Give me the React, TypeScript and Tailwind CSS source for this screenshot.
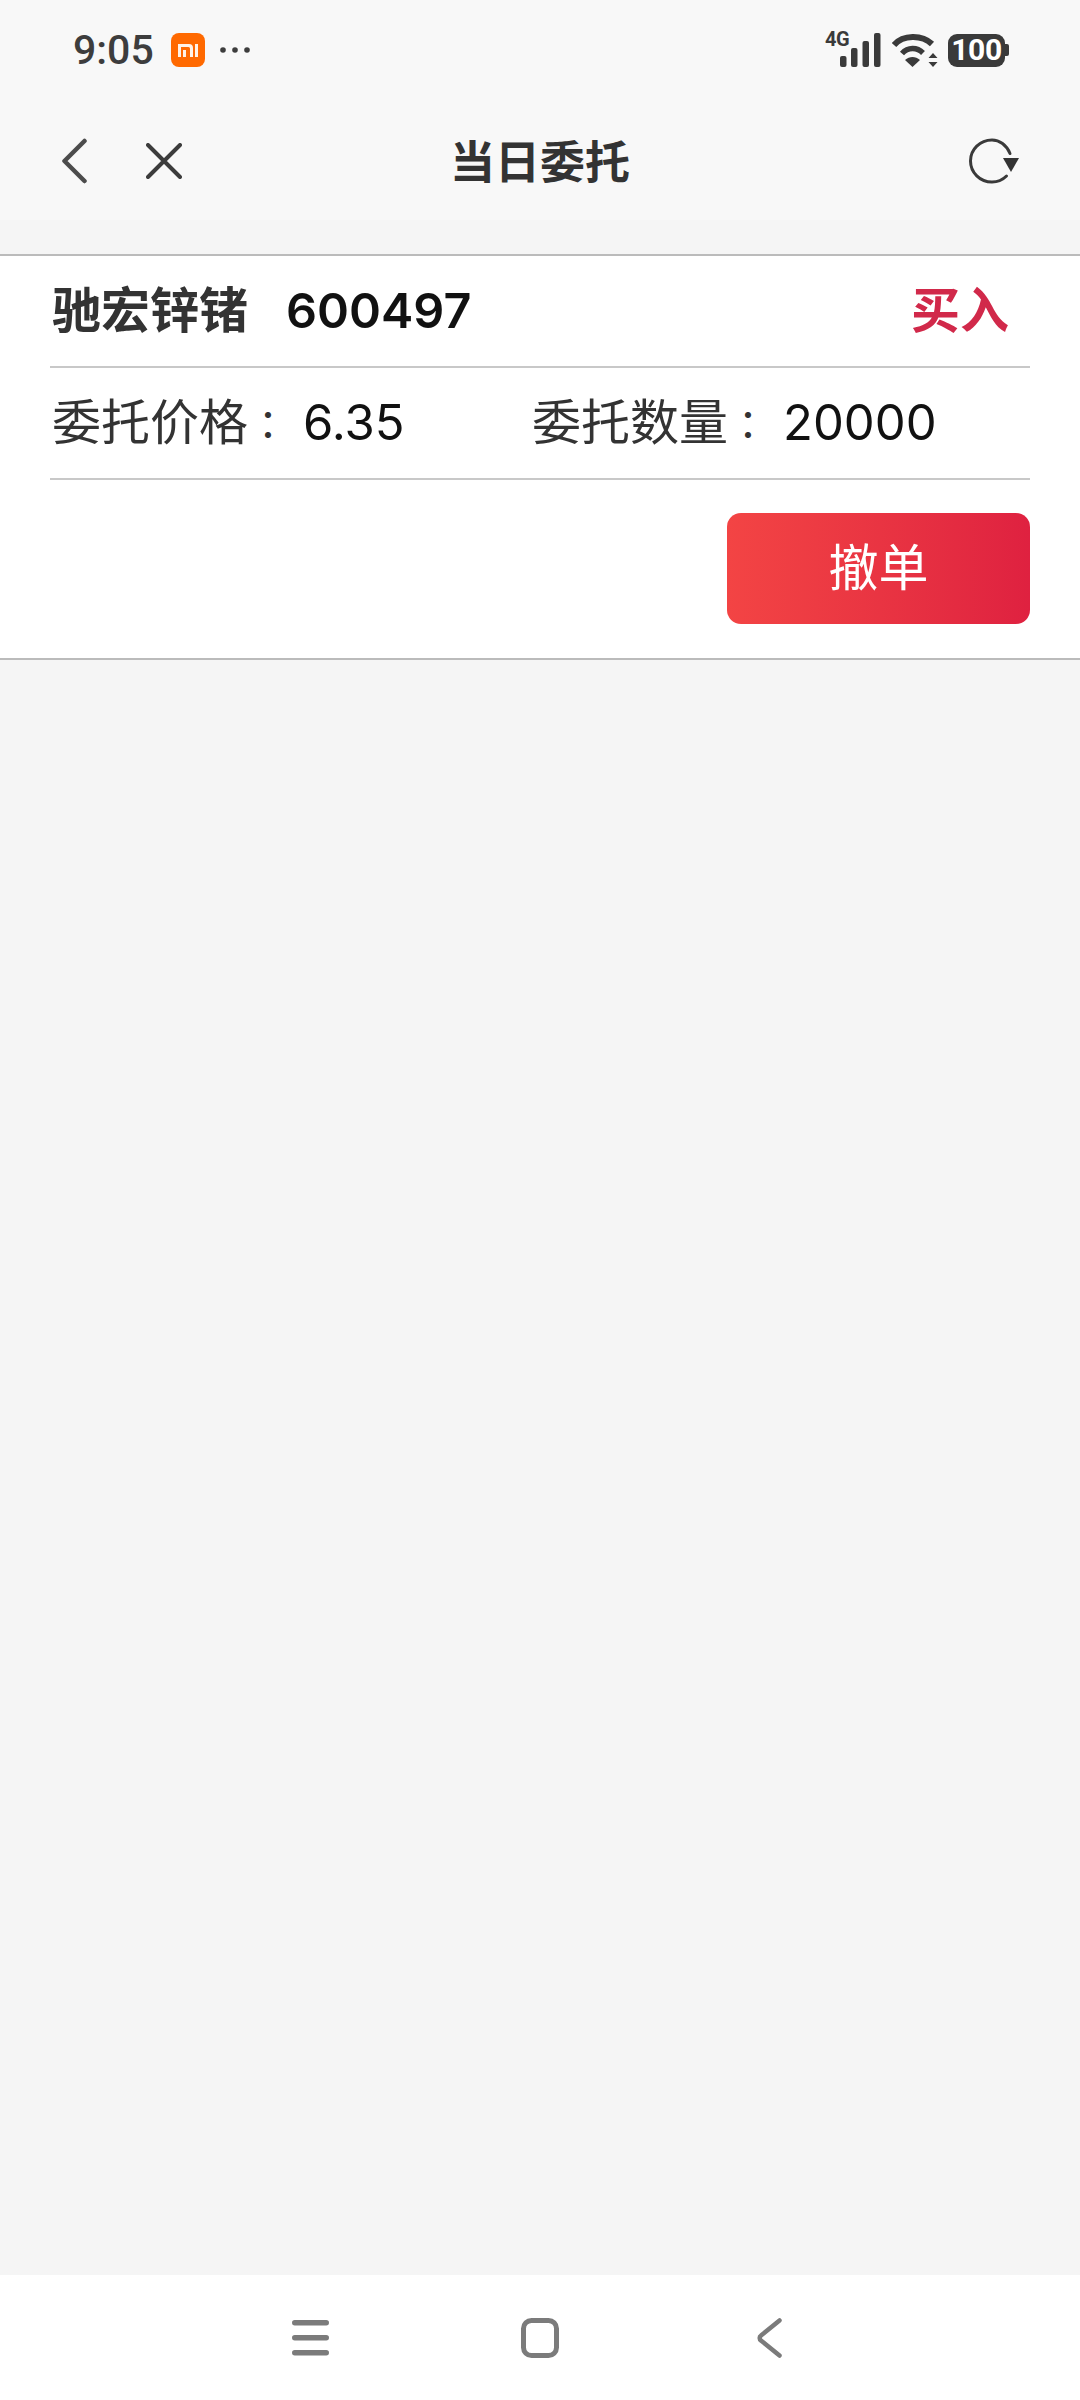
import React from "react";

const sans = "font-['Inter','Noto_Sans_CJK_SC',sans-serif]";

function MiBadge() {
  return (
    <svg width="34" height="34" viewBox="0 0 34 34" className="ml-[17px]">
      <rect width="34" height="34" rx="8" fill="#ff6900" />
      <path d="M7 11h11a4 4 0 0 1 4 4v9h-3v-8.500a1.500 1.500 0 0 0-1.500-1.500H10v10H7zM12 17h3v7h-3zM24 11h3v13h-3z" fill="#fff2e6" />
    </svg>
  );
}

function SignalIcon() {
  return (
    <div className="relative w-[55px] h-[34px]">
      <span className="absolute left-[-1px] top-[-4px] font-['Roboto',sans-serif] text-[20px] leading-[20px] font-bold tracking-[-0.5px] text-[#3a3a3a]">4G</span>
      <svg width="55" height="34" viewBox="0 0 55 34" fill="#3a3a3a">
        <rect x="14" y="23" width="6.500" height="11" rx="2" />
        <rect x="25" y="15" width="6.500" height="19" rx="2" />
        <rect x="36.500" y="8" width="6.500" height="26" rx="2" />
        <rect x="48" y="0" width="6.500" height="34" rx="2" />
      </svg>
    </div>
  );
}

function WifiIcon() {
  return (
    <svg width="46" height="34" viewBox="0 0 46 34" className="ml-[11px]" fill="none">
      <path d="M2 12C11 1.500 30 1.500 40 11" stroke="#3a3a3a" strokeWidth="6" />
      <path d="M10 20.500C16 14 25 14 31 20" stroke="#3a3a3a" strokeWidth="5.500" />
      <path d="M13 27C17.500 23 23.500 23 28 27l-7.500 7z" fill="#3a3a3a" />
      <path d="M41 20l4.500 5h-9zM41 34l-4.500-5h9z" fill="#3a3a3a" />
    </svg>
  );
}

function BatteryIcon() {
  return (
    <div className="ml-[10px] flex items-center">
      <div className="w-[57px] h-[33px] rounded-[9px] bg-[#3a3a3a] flex items-center justify-center font-['Roboto',sans-serif] text-[30px] leading-none font-bold tracking-[-0.3px] text-white">
        100
      </div>
      <div className="w-[4px] h-[12px] rounded-r-[2px] bg-[#3a3a3a]" />
    </div>
  );
}

function Header() {
  return (
    <header className="h-[220px] bg-[#f8f8f8]">
      <div className="h-[100px] flex items-center justify-between pl-[73px] pr-[71px]">
        <div className="flex items-center">
          <span className="font-['Roboto',sans-serif] text-[41px] leading-none font-medium text-[#3d3d3d]">9:05</span>
          <MiBadge />
          <svg width="30" height="6" viewBox="0 0 30 6" className="ml-[15px]" fill="#3d3d3d">
            <circle cx="3" cy="3" r="2.800" />
            <circle cx="15" cy="3" r="2.800" />
            <circle cx="27" cy="3" r="2.800" />
          </svg>
        </div>
        <div className="flex items-center">
          <SignalIcon />
          <WifiIcon />
          <BatteryIcon />
        </div>
      </div>
      <div className="h-[122px] flex items-center px-[61px]">
        <div className="flex-1 flex items-center">
          <svg width="26" height="46" viewBox="0 0 26 46" fill="none">
            <path d="M23.500 3L3.500 23l20 20" stroke="#4c4c4c" strokeWidth="4.500" strokeLinecap="round" strokeLinejoin="round" />
          </svg>
          <svg width="36" height="36" viewBox="0 0 36 36" className="ml-[59px]" fill="none">
            <path d="M2 2l32 32M34 2L2 34" stroke="#3c3c3c" strokeWidth="4" strokeLinecap="round" />
          </svg>
        </div>
        <h1 className={`${sans} mt-[3px] text-[45px] leading-[60px] font-bold text-[#333333]`}>当日委托</h1>
        <div className="flex-1 flex justify-end">
          <svg width="50" height="46" viewBox="0 0 50 46" fill="none">
            <path d="M41 15.500C37.500 7 30.500 2 23 2 11 2 1.500 11.500 1.500 23S11 44 23 44c6 0 11-2.500 14.500-6" stroke="#3a3a3a" strokeWidth="3" strokeLinecap="round" />
            <path d="M34 20H50l-8 14z" fill="#333333" />
          </svg>
        </div>
      </div>
    </header>
  );
}

function OrderField({ label, value }: { label: string; value: string }) {
  return (
    <div className="flex items-center">
      <span className="text-[#333333]">{label}</span>
      <span className="font-['Noto_Sans_CJK_TC',sans-serif] text-[40px] text-[#333333]">：</span>
      <span className="ml-[15px] text-[#111111]">{value}</span>
    </div>
  );
}

function OrderCard() {
  return (
    <section className={`${sans} bg-white border-y-2 border-[#bbbbbb]`}>
      <div className="px-[50px]">
        <div className="h-[112px] flex items-center justify-between border-b-2 border-[#c8c8c8] pl-[2px] pr-[21px]">
          <div className="flex items-center text-[49px]">
            <span className="font-bold text-[#333333]">驰宏锌锗</span>
            <span className="ml-[38px] text-[48.500px] font-semibold text-[#111111]">600497</span>
          </div>
          <span className="text-[49px] font-bold text-[#d1294a]">买入</span>
        </div>
        <div className="h-[112px] grid grid-cols-[480px_1fr] items-center border-b-2 border-[#c8c8c8] pl-[2px] text-[49px]">
          <OrderField label="委托价格" value="6.35" />
          <OrderField label="委托数量" value="20000" />
        </div>
        <div className="pt-[33px] pb-[34px] flex justify-end">
          <button className="w-[303px] h-[111px] rounded-[14px] bg-gradient-to-r from-[#f34444] to-[#df2140] text-[50px] text-white">
            撤单
          </button>
        </div>
      </div>
    </section>
  );
}

function NavBar() {
  return (
    <footer className="h-[125px] bg-white flex items-center pl-[292px]">
      <svg width="37" height="36" viewBox="0 0 37 36" fill="#7b7b7b">
        <rect x="0" y="0" width="37" height="5.500" rx="2.750" />
        <rect x="0" y="15" width="37" height="5.500" rx="2.750" />
        <rect x="0" y="30" width="37" height="5.500" rx="2.750" />
      </svg>
      <svg width="38" height="40" viewBox="0 0 38 40" className="ml-[192px]" fill="none">
        <rect x="2.500" y="2.500" width="33" height="35" rx="8" stroke="#7b7b7b" strokeWidth="5" />
      </svg>
      <svg width="25" height="40" viewBox="0 0 25 40" className="ml-[198px]" fill="none">
        <path d="M22.500 2.500L4 17.500a3 3 0 0 0 0 5L22.500 37.500" stroke="#7b7b7b" strokeWidth="4.500" strokeLinecap="round" strokeLinejoin="round" />
      </svg>
    </footer>
  );
}

export default function App() {
  return (
    <div className="w-[1080px] h-[2400px] flex flex-col bg-[#f5f5f5] overflow-hidden">
      <Header />
      <div className="h-[34px]" />
      <OrderCard />
      <div className="flex-1" />
      <NavBar />
    </div>
  );
}
